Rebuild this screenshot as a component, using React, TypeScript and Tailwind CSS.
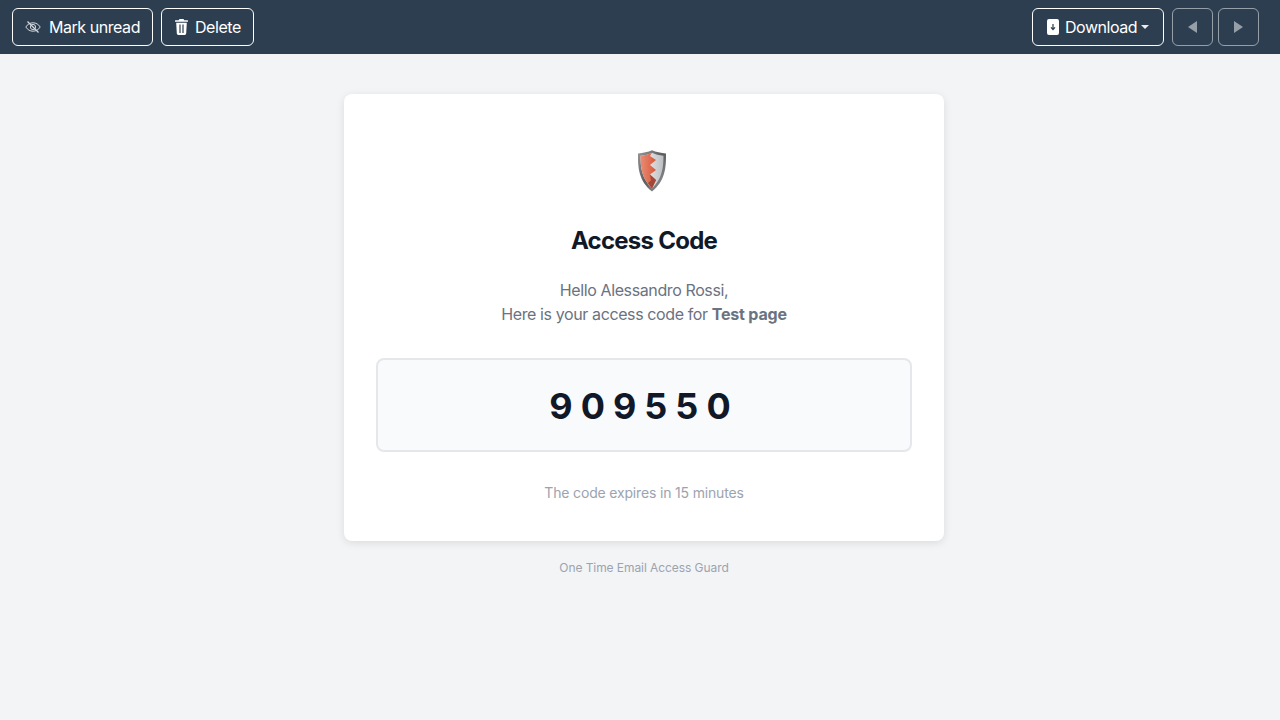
const btn =
  'flex h-[38px] items-center rounded-md border border-white text-base tracking-[-0.45px] text-white'

function EyeOff() {
  return (
    <svg className="h-4 w-4" viewBox="0 0 16 16" fill="none" stroke="#d5d9de" strokeWidth="1">
      <path d="M0.800 8c1.800-2.800 4.200-4.200 7.200-4.200s5.400 1.400 7.200 4.200c-1.800 2.800-4.200 4.200-7.200 4.200S2.600 10.800 0.800 8z" />
      <circle cx="8" cy="8" r="2.600" />
      <path d="M2.500 2.500l11 11" strokeWidth="1.300" />
    </svg>
  )
}

function Trash() {
  return (
    <svg className="h-4 w-[13px]" viewBox="0 0 13 16" fill="#fff">
      <path d="M4.500 0h4l.8 1.200h3.200a.5.5 0 0 1 .5.500v1.100H0V1.700a.5.5 0 0 1 .5-.5h3.200z" />
      <path d="M1.200 3.800h10.600l-.6 10.800A1.500 1.500 0 0 1 9.700 16H3.300a1.500 1.500 0 0 1-1.500-1.400z" />
      <path d="M5 5.500v8.500M8 5.500v8.500" stroke="#2c3e50" strokeWidth="1.200" />
    </svg>
  )
}

function FileDown() {
  return (
    <svg className="h-4 w-3" viewBox="0 0 12 16">
      <rect width="12" height="16" rx="2" fill="#fff" />
      <path d="M6 5v5M4 8.300L6 10.500 8 8.300" fill="none" stroke="#2c3e50" strokeWidth="1.200" />
    </svg>
  )
}

function Shield() {
  return (
    <svg className="h-[42px] w-[30px]" viewBox="0 0 30 42">
      <defs>
        <linearGradient id="rim" x1="0" y1="0" x2="1" y2="1">
          <stop offset="0" stopColor="#98989a" />
          <stop offset="0.5" stopColor="#5c5c5e" />
          <stop offset="1" stopColor="#a2a2a4" />
        </linearGradient>
        <linearGradient id="silver" x1="0" y1="0" x2="1" y2="0">
          <stop offset="0" stopColor="#f6f6f7" />
          <stop offset="1" stopColor="#bcbec2" />
        </linearGradient>
        <linearGradient id="red" x1="0" y1="0" x2="1" y2="0">
          <stop offset="0" stopColor="#e98c74" />
          <stop offset="1" stopColor="#d9583a" />
        </linearGradient>
      </defs>
      <path d="M15 0.300C11 2 6 3 1 3.500 0.800 18 2 31 15 41.500 28 31 29.200 18 29 3.500 24 3 19 2 15 0.300z" fill="url(#rim)" />
      <path d="M15 2.800C12 4.300 8 5.300 3.500 5.800 3.500 18 5 29 15 38.500 25 29 26.500 18 26.500 5.800 22 5.300 18 4.300 15 2.800z" fill="url(#silver)" />
      <path d="M15 2.800C12 4.300 8 5.300 3.500 5.800 3.500 18 5 29 15 38.500L19 30 13 24.500 19 20 13 15 19 10 13 6z" fill="url(#red)" />
      <path d="M15 38.500L19 30 13 24.500 14 30.500 11 33z" fill="#a0483a" />
    </svg>
  )
}

export default function App() {
  return (
    <div className="min-h-[720px] bg-[#f3f4f6] font-['Inter',sans-serif]">
      <div className="flex h-[54px] items-center justify-between bg-[#2c3e50] pl-3 pr-[21px]">
        <div className="flex gap-2">
          <button className={`${btn} w-[141px] gap-2 pl-3`}>
            <EyeOff />
            Mark unread
          </button>
          <button className={`${btn} w-[93px] gap-[7px] pl-[13px]`}>
            <Trash />
            Delete
          </button>
        </div>
        <div className="flex items-center">
          <button className={`${btn} mr-2 w-[132px] gap-[6px] pl-[14px]`}>
            <FileDown />
            Download
            <span className="-ml-[2px] h-0 w-0 border-x-[4.500px] border-t-[4.500px] border-x-transparent border-t-white/90" />
          </button>
          <button className={`${btn} mr-[5px] w-[41px] justify-center border-white/50`}>
            <span className="h-0 w-0 border-y-[6px] border-r-[9px] border-y-transparent border-r-white/50" />
          </button>
          <button className={`${btn} w-[41px] justify-center border-white/50`}>
            <span className="h-0 w-0 border-y-[6px] border-l-[9px] border-y-transparent border-l-white/50" />
          </button>
        </div>
      </div>

      <div className="flex flex-col items-center pl-2 pt-10">
        <div className="flex h-[447px] w-[600px] flex-col items-center rounded-lg bg-white px-8 pt-14 shadow-[0_2px_8px_rgba(0,0,0,0.1)]">
          <div className="ml-4">
            <Shield />
          </div>
          <h1 className="mt-[33px] text-2xl font-bold leading-8 tracking-[-0.75px] text-[#111827]">Access Code</h1>
          <p className="mt-[21px] text-center text-base leading-6 tracking-[-0.39px] text-[#6b7280]">
            Hello Alessandro Rossi,
            <br />
            Here is your access code for <strong className="font-bold tracking-[-0.2px]">Test page</strong>
          </p>
          <div className="mt-8 flex h-[94px] w-full items-center justify-center rounded-lg border-2 border-[#e5e7eb] bg-[#f9fafb] pt-px">
            <span className="text-4xl font-bold tracking-[8px] text-[#111827]">909550</span>
          </div>
          <p className="mt-[31px] text-sm leading-5 tracking-[-0.17px] text-[#9ca3af]">The code expires in 15 minutes</p>
        </div>
        <p className="mt-[19px] text-xs leading-4 tracking-[-0.07px] text-[#9ca3af]">One Time Email Access Guard</p>
      </div>
    </div>
  )
}
